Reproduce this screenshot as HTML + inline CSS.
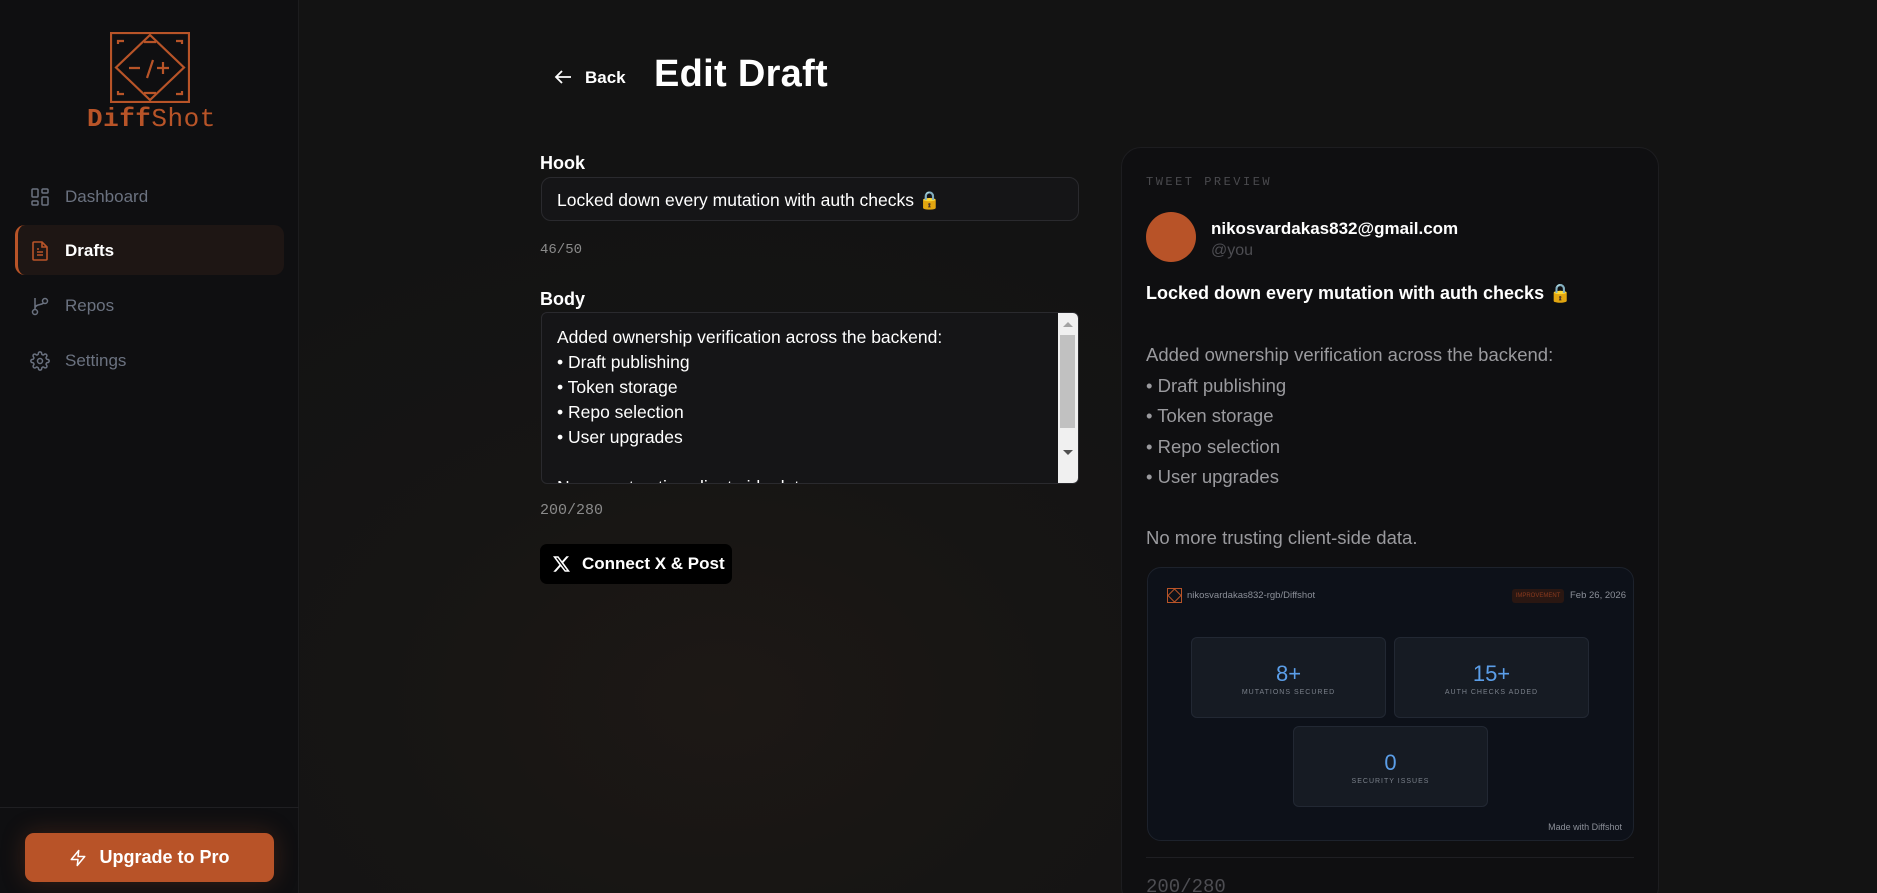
<!DOCTYPE html>
<html style="width:1877px;height:893px;overflow:hidden"><head><meta charset="utf-8"><style>
*{box-sizing:border-box;margin:0;padding:0}
html,body{overflow:hidden}
body{width:1877px;height:893px;background:#131313;font-family:"Liberation Sans",sans-serif;position:relative}
.main{position:absolute;left:300px;top:0;width:1577px;height:893px;background:radial-gradient(ellipse 700px 500px at 420px 700px,#1d1815 0%,#161514 50%,#131313 100%)}
.side{position:absolute;left:0;top:0;width:299px;height:893px;background:#0f0f11;border-right:1px solid #1c1c1e}
.abs{position:absolute}
.nav{position:absolute;left:65px;font-size:17px;color:#6b7280;transform:translateY(-50%)}
.mono{font-family:"Liberation Mono",monospace}
</style></head><body>
<div class="main"></div>
<div class="side">
  <svg class="abs" style="left:110px;top:32px" width="80" height="71" viewBox="0 0 80 71" fill="none" stroke="#b85428" stroke-width="2.2">
    <rect x="1" y="1" width="78" height="69"/>
    <path d="M40 3 L74 35.5 L40 68 L6 35.5 Z"/>
    <path d="M8 12 V9 H14 M72 12 V9 H66 M8 59 V62 H14 M72 59 V62 H66"/>
    <path d="M34 10 H46 M34 61 H46"/>
    <path d="M19 36 H30 M43 28 L37 46 M47 36 H59 M53 30 V42"/>
  </svg>
  <div class="abs mono" style="left:87px;top:104px;font-size:26px;color:#b85428;letter-spacing:0.5px"><b>Diff</b>Shot</div>
  <svg class="abs" style="left:31px;top:188px" width="18" height="18" viewBox="0 0 18 18" fill="none" stroke="#6b7280" stroke-width="1.5"><rect x="1" y="1" width="6" height="8" rx="1"/><rect x="11" y="1" width="6" height="4" rx="1"/><rect x="11" y="9" width="6" height="8" rx="1"/><rect x="1" y="13" width="6" height="4" rx="1"/></svg>
  <div class="nav" style="top:197px">Dashboard</div>
  <div class="abs" style="left:15px;top:225px;width:269px;height:50px;background:#1e1614;border-radius:10px;border-left:3px solid #b85428"></div>
  <svg class="abs" style="left:31px;top:241px" width="18" height="20" viewBox="0 0 18 20" fill="none" stroke="#b85428" stroke-width="1.6"><path d="M3 1 H11 L16 6 V18 A1 1 0 0 1 15 19 H3 A1 1 0 0 1 2 18 V2 A1 1 0 0 1 3 1Z M11 1 V6 H16 M6 11 H12 M6 14 H12 M6 8 H8"/></svg>
  <div class="nav" style="top:251px;color:#fff;font-weight:bold">Drafts</div>
  <svg class="abs" style="left:31px;top:296px" width="18" height="20" viewBox="0 0 18 20" fill="none" stroke="#6b7280" stroke-width="1.5"><circle cx="4" cy="16" r="2.5"/><circle cx="14" cy="5" r="2.5"/><path d="M4 2 V13.5 M4 12 C4 8 11.5 9 12.5 7"/></svg>
  <div class="nav" style="top:306px">Repos</div>
  <svg class="abs" style="left:30px;top:351px" width="20" height="20" viewBox="0 0 24 24" fill="none" stroke="#6b7280" stroke-width="1.8"><circle cx="12" cy="12" r="3"/><path d="M19.4 15a1.65 1.65 0 0 0 .33 1.82l.06.06a2 2 0 1 1-2.83 2.830l-.06-.06a1.65 1.65 0 0 0-1.82-.33 1.65 1.65 0 0 0-1 1.51V21a2 2 0 1 1-4 0v-.09A1.65 1.65 0 0 0 9 19.4a1.65 1.65 0 0 0-1.82.33l-.06.06a2 2 0 1 1-2.83-2.83l.06-.06A1.65 1.65 0 0 0 4.6 15a1.65 1.65 0 0 0-1.51-1H3a2 2 0 1 1 0-4h.09A1.65 1.65 0 0 0 4.6 9a1.65 1.65 0 0 0-.33-1.82l-.06-.06a2 2 0 1 1 2.83-2.83l.06.06A1.65 1.65 0 0 0 9 4.6a1.65 1.65 0 0 0 1-1.51V3a2 2 0 1 1 4 0v.09a1.65 1.65 0 0 0 1 1.51 1.65 1.65 0 0 0 1.82-.33l.06-.06a2 2 0 1 1 2.83 2.83l-.06.06A1.65 1.65 0 0 0 19.4 9a1.65 1.65 0 0 0 1.51 1H21a2 2 0 1 1 0 4h-.09a1.65 1.65 0 0 0-1.51 1z"/></svg>
  <div class="nav" style="top:361px">Settings</div>
  <div class="abs" style="left:0;top:807px;width:299px;height:1px;background:#1f1f22"></div>
  <div class="abs" style="left:25px;top:833px;width:249px;height:49px;background:#b85328;border-radius:9px;box-shadow:0 0 24px rgba(184,83,40,0.25);color:#fff;font-weight:bold;font-size:18px;display:flex;align-items:center;justify-content:center;gap:12px">
    <svg width="18" height="20" viewBox="0 0 24 24" fill="none" stroke="#fff" stroke-width="2" stroke-linejoin="round"><path d="M13 2 L3 14 H12 L11 22 L21 10 H12 Z"/></svg>Upgrade to Pro</div>
</div>

<svg class="abs" style="left:553px;top:69px" width="20" height="16" viewBox="0 0 20 16" fill="none" stroke="#fff" stroke-width="1.8"><path d="M18 8 H3 M9 2 L3 8 L9 14"/></svg>
<div class="abs" style="left:585px;top:68px;font-size:17px;font-weight:bold;color:#fff">Back</div>
<div class="abs" style="left:654px;top:53px;font-size:38px;font-weight:bold;color:#fff;letter-spacing:0.3px">Edit Draft</div>

<div class="abs" style="left:540px;top:153px;font-size:18px;font-weight:bold;color:#fff">Hook</div>
<div class="abs" style="left:541px;top:177px;width:538px;height:44px;border:1px solid #2a2a2e;border-radius:10px;background:#151517;color:#fff;font-size:17.5px;padding:12px 0 0 15px">Locked down every mutation with auth checks 🔒</div>
<div class="abs mono" style="left:540px;top:242px;font-size:14px;color:#8a8a8a">46/50</div>
<div class="abs" style="left:540px;top:289px;font-size:18px;font-weight:bold;color:#fff">Body</div>
<div class="abs" style="left:541px;top:312px;width:538px;height:172px;border:1px solid #2a2a2e;border-radius:6px;background:#151517;overflow:hidden">
  <div style="position:absolute;left:15px;top:12px;color:#fff;font-size:17.5px;line-height:25px">Added ownership verification across the backend:<br>• Draft publishing<br>• Token storage<br>• Repo selection<br>• User upgrades<br><br>No more trusting client-side data.</div>
  <div style="position:absolute;right:0;top:0;width:20px;height:172px;background:#f0f0f0"></div>
  <div style="position:absolute;right:3px;top:22px;width:15px;height:93px;background:#c1c1c1"></div>
  <div style="position:absolute;right:5px;top:9px;border:5px solid transparent;border-bottom:5px solid #a3a3a3;border-top:0"></div>
  <div style="position:absolute;right:5px;top:137px;border:5px solid transparent;border-top:5px solid #505050;border-bottom:0"></div>
</div>
<div class="abs mono" style="left:540px;top:502px;font-size:15px;color:#8a8a8a">200/280</div>
<div class="abs" style="left:540px;top:544px;width:192px;height:40px;background:#000;border-radius:7px;color:#fff;font-weight:bold;font-size:17px;display:flex;align-items:center;padding-left:13px;gap:12px">
  <svg width="17" height="16" viewBox="0 0 24 22"><path fill="#fff" d="M18.9 0h3.7l-8 9.2L24 22h-7.4l-5.8-7.6L4.1 22H.4l8.6-9.8L0 0h7.6l5.2 6.9zm-1.3 19.8h2L6.5 2.1H4.3z"/></svg>Connect X &amp; Post</div>

<div class="abs" style="left:1121px;top:147px;width:538px;height:760px;background:#0f0f11;border:1px solid #1d1d20;border-radius:20px"></div>
<div class="abs mono" style="left:1146px;top:175px;font-size:12px;color:#4a4a4e;letter-spacing:2.5px">TWEET PREVIEW</div>
<div class="abs" style="left:1146px;top:212px;width:50px;height:50px;border-radius:50%;background:#b85328"></div>
<div class="abs" style="left:1211px;top:219px;font-size:17px;font-weight:bold;color:#fff">nikosvardakas832@gmail.com</div>
<div class="abs" style="left:1211px;top:242px;font-size:16px;color:#4d4d52">@you</div>
<div class="abs" style="left:1146px;top:283px;font-size:18px;font-weight:bold;color:#fff">Locked down every mutation with auth checks 🔒</div>
<div class="abs" style="left:1146px;top:340px;font-size:18.5px;line-height:30.5px;color:#9a9a9e">Added ownership verification across the backend:<br>• Draft publishing<br>• Token storage<br>• Repo selection<br>• User upgrades<br><br>No more trusting client-side data.</div>

<div class="abs" style="left:1147px;top:567px;width:487px;height:274px;background:#0d1119;border:1px solid #1d222c;border-radius:14px"></div>
<svg class="abs" style="left:1167px;top:588px" width="15" height="15" viewBox="0 0 15 15" fill="none" stroke="#b85428" stroke-width="1"><rect x="0.5" y="0.5" width="14" height="14"/><path d="M7.5 1 L14 7.5 L7.5 14 L1 7.5Z"/></svg>
<div class="abs" style="left:1187px;top:590px;font-size:9.5px;color:#8b8f98">nikosvardakas832-rgb/Diffshot</div>
<div class="abs" style="left:1512px;top:589px;width:52px;height:14px;background:#2a1712;border-radius:3px;color:#8a3a1e;font-size:6px;text-align:center;line-height:14px">IMPROVEMENT</div>
<div class="abs" style="left:1570px;top:590px;font-size:9.5px;color:#8b8f98">Feb 26, 2026</div>
<div class="abs" style="left:1191px;top:637px;width:195px;height:81px;background:#161b23;border:1px solid #222833;border-radius:6px;text-align:center"><div style="font-size:22px;color:#5b9ee8;margin-top:23px">8+</div><div style="font-size:7px;color:#7a808a;letter-spacing:1px;margin-top:2px">MUTATIONS SECURED</div></div>
<div class="abs" style="left:1394px;top:637px;width:195px;height:81px;background:#161b23;border:1px solid #222833;border-radius:6px;text-align:center"><div style="font-size:22px;color:#5b9ee8;margin-top:23px">15+</div><div style="font-size:7px;color:#7a808a;letter-spacing:1px;margin-top:2px">AUTH CHECKS ADDED</div></div>
<div class="abs" style="left:1293px;top:726px;width:195px;height:81px;background:#161b23;border:1px solid #222833;border-radius:6px;text-align:center"><div style="font-size:22px;color:#5b9ee8;margin-top:23px">0</div><div style="font-size:7px;color:#7a808a;letter-spacing:1px;margin-top:2px">SECURITY ISSUES</div></div>
<div class="abs" style="left:1520px;top:822px;width:102px;text-align:right;font-size:9px;color:#8b8f98">Made with Diffshot</div>
<div class="abs" style="left:1146px;top:857px;width:488px;height:1px;background:#1f1f23"></div>
<div class="abs mono" style="left:1146px;top:876px;font-size:19px;color:#4d4d52">200/280</div>
</body></html>
